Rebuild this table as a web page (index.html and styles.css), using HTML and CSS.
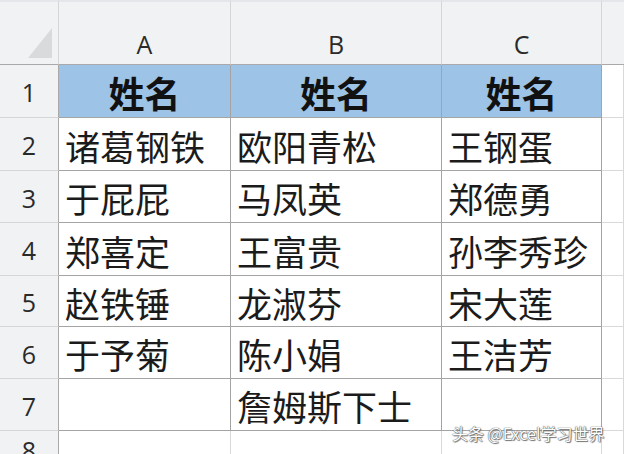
FILE: index.html
```html
<!DOCTYPE html>
<html lang="zh">
<head>
<meta charset="utf-8">
<link rel="stylesheet" href="styles.css">
</head>
<body>
<div class="sheet">
  <div class="corner"><span class="tri"></span></div>
  <div class="colhead">A</div>
  <div class="colhead">B</div>
  <div class="colhead">C</div>
  <div class="colhead last"></div>

  <div class="rowhead">1</div>
  <div class="cell hdr">姓名</div>
  <div class="cell hdr">姓名</div>
  <div class="cell hdr">姓名</div>
  <div class="cell empty"></div>

  <div class="rowhead">2</div>
  <div class="cell">诸葛钢铁</div>
  <div class="cell">欧阳青松</div>
  <div class="cell">王钢蛋</div>
  <div class="cell empty"></div>

  <div class="rowhead">3</div>
  <div class="cell">于屁屁</div>
  <div class="cell">马凤英</div>
  <div class="cell">郑德勇</div>
  <div class="cell empty"></div>

  <div class="rowhead">4</div>
  <div class="cell">郑喜定</div>
  <div class="cell">王富贵</div>
  <div class="cell">孙李秀珍</div>
  <div class="cell empty"></div>

  <div class="rowhead">5</div>
  <div class="cell">赵铁锤</div>
  <div class="cell">龙淑芬</div>
  <div class="cell">宋大莲</div>
  <div class="cell empty"></div>

  <div class="rowhead">6</div>
  <div class="cell">于予菊</div>
  <div class="cell">陈小娟</div>
  <div class="cell">王洁芳</div>
  <div class="cell empty"></div>

  <div class="rowhead">7</div>
  <div class="cell"></div>
  <div class="cell">詹姆斯下士</div>
  <div class="cell"></div>
  <div class="cell empty"></div>

  <div class="rowhead">8</div>
  <div class="cell empty"></div>
  <div class="cell empty"></div>
  <div class="cell empty"></div>
  <div class="cell empty"></div>

  <div class="watermark">头条 @Excel学习世界</div>
</div>
</body>
</html>
```

FILE: styles.css
```css
html, body {
  margin: 0;
  padding: 0;
  background: #ffffff;
}

.sheet {
  position: relative;
  width: 624px;
  height: 454px;
  overflow: hidden;
  display: grid;
  grid-template-columns: 59px 172px 211px 160px 1fr;
  grid-template-rows: 65px 53px 53px 52px 53px 51px 52px 52px 1fr;
  font-family: "Noto Sans CJK SC", "Noto Sans", sans-serif;
  color: #1b1b1b;
}

.corner {
  background: #f1f2f4;
  border-right: 1px solid #d6d6d6;
  border-bottom: 1px solid #a9a9a9;
  border-top: 2px solid #e4e6ea;
  position: relative;
}

.tri {
  position: absolute;
  left: 28px;
  top: 26px;
  width: 0;
  height: 0;
  border-left: 24px solid transparent;
  border-bottom: 30px solid #d9dadc;
}

.colhead {
  background: #f1f2f4;
  border-top: 2px solid #e4e6ea;
  border-right: 1px solid #d6d6d6;
  border-bottom: 1px solid #a9a9a9;
  display: flex;
  align-items: center;
  justify-content: center;
  padding-top: 22px;
  box-sizing: border-box;
  font-family: "Open Sans", "Liberation Sans", sans-serif;
  font-size: 25px;
  color: #2a2a2a;
}

.colhead.last {
  border-right: none;
}

.rowhead {
  background: #f1f2f4;
  border-right: 1px solid #a9a9a9;
  border-bottom: 1px solid #d6d6d6;
  display: flex;
  align-items: center;
  justify-content: center;
  font-family: "Open Sans", "Liberation Sans", sans-serif;
  font-size: 25px;
  color: #2a2a2a;
  padding-top: 2px;
  box-sizing: border-box;
}

.cell {
  border-right: 1px solid #a4a4a4;
  border-bottom: 1px solid #a4a4a4;
  display: flex;
  align-items: center;
  padding-left: 6px;
  padding-top: 2px;
  box-sizing: border-box;
  font-size: 35px;
  white-space: nowrap;
  overflow: hidden;
}

.cell.empty {
  border-right: 1px solid #d9d9d9;
  border-bottom: 1px solid #d9d9d9;
}

.cell.hdr {
  background: #9dc3e6;
  font-weight: 700;
  font-size: 36px;
  justify-content: center;
  padding-left: 0;
  color: #111111;
}

.watermark {
  position: absolute;
  left: 452px;
  top: 421px;
  font-family: "Noto Sans CJK SC", sans-serif;
  font-size: 16px;
  color: #ffffff;
  text-shadow: 0 0 1px #555, 0 0 1px #555, 1px 1px 1px #777;
  white-space: nowrap;
}
```
